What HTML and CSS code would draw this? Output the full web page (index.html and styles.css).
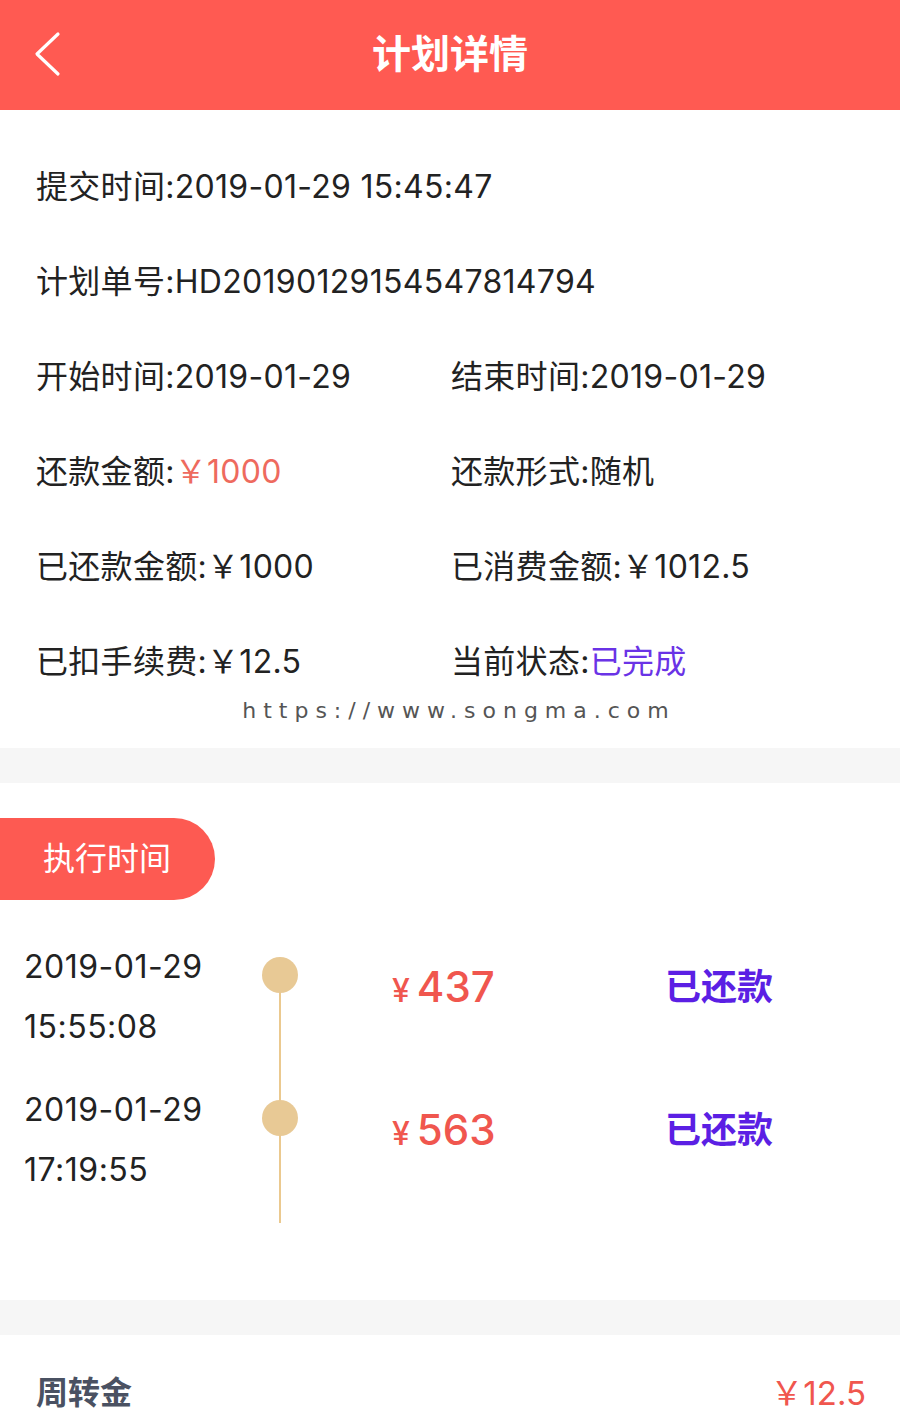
FILE: index.html
```html
<!DOCTYPE html>
<html lang="zh-CN">
<head>
  <meta charset="UTF-8">
  <meta name="viewport" content="width=device-width, initial-scale=1.0">
  <title>计划详情</title>
  <link rel="stylesheet" href="styles.css">
</head>
<body>
  <!-- Header -->
  <div class="header">
    <a class="back" href="#">
      <svg width="30" height="46" viewBox="0 0 30 46"><polyline points="25,3 4,23 25,43" fill="none" stroke="#fff" stroke-width="3.2" stroke-linecap="round" stroke-linejoin="round"/></svg>
    </a>
    <h1>计划详情</h1>
  </div>

  <!-- Plan info -->
  <div class="section info">
    <div class="info-row full">提交时间:2019-01-29 15:45:47</div>
    <div class="info-row full">计划单号:HD20190129154547814794</div>
    <div class="info-grid">
      <div class="info-row">开始时间:2019-01-29</div>
      <div class="info-row">结束时间:2019-01-29</div>
      <div class="info-row">还款金额:<span class="money">￥1000</span></div>
      <div class="info-row">还款形式:随机</div>
      <div class="info-row">已还款金额:￥1000</div>
      <div class="info-row">已消费金额:￥1012.5</div>
      <div class="info-row">已扣手续费:￥12.5</div>
      <div class="info-row">当前状态:<span class="status-text">已完成</span></div>
    </div>
    <div class="watermark">https://www.songma.com</div>
  </div>

  <div class="divider"></div>

  <!-- Execution timeline -->
  <div class="section timeline">
    <div class="pill">执行时间</div>
    <div class="tl-list">
      <div class="tl-row">
        <div class="tl-time">
          <div>2019-01-29</div>
          <div>15:55:08</div>
        </div>
        <div class="tl-axis"><span class="dot"></span></div>
        <div class="tl-amount"><small>¥</small>437</div>
        <div class="tl-status">已还款</div>
      </div>
      <div class="tl-row">
        <div class="tl-time">
          <div>2019-01-29</div>
          <div>17:19:55</div>
        </div>
        <div class="tl-axis"><span class="dot"></span></div>
        <div class="tl-amount"><small>¥</small>563</div>
        <div class="tl-status">已还款</div>
      </div>
    </div>
  </div>

  <div class="divider"></div>

  <!-- Footer summary -->
  <div class="section summary">
    <span class="summary-label">周转金</span>
    <span class="summary-value">￥12.5</span>
  </div>
</body>
</html>
```

FILE: styles.css
```css
/* Reset */
* {
  margin: 0;
  padding: 0;
  box-sizing: border-box;
}

body {
  font-family: "Inter", "Noto Sans CJK SC", sans-serif;
  background: #fff;
  color: #222;
}

/* Header */
.header {
  height: 110px;
  background: #ff5a52;
  display: flex;
  align-items: center;
  justify-content: center;
  position: relative;
}

.header h1 {
  color: #fff;
  font-size: 39px;
  font-weight: 700;
  line-height: 1;
  margin-top: -4px;
}

.back {
  position: absolute;
  left: 33px;
  top: 31px;
  display: block;
  width: 30px;
  height: 46px;
}

.section {
  background: #fff;
}

.divider {
  height: 35px;
  background: #f6f6f6;
}

/* Info */
.info {
  padding: 47px 0 23px 36px;
  display: flex;
  flex-direction: column;
  gap: 35px;
}

.info-grid {
  display: grid;
  grid-template-columns: 415px 1fr;
  row-gap: 35px;
}

.info-row {
  font-size: 32px;
  letter-spacing: 0.3px;
  line-height: 60px;
  height: 60px;
  white-space: nowrap;
}

.money {
  color: #ee6a5e;
}

.status-text {
  color: #6a33e6;
}

.watermark {
  margin-top: -30px;
  margin-left: -18px;
  text-align: center;
  font-size: 22px;
  line-height: 28px;
  letter-spacing: 7px;
  color: #555;
  font-family: "DejaVu Sans", sans-serif;
}

/* Timeline */
.timeline {
  padding: 35px 0 77px;
}

.pill {
  width: 215px;
  height: 82px;
  background: #fd5a52;
  border-radius: 0 41px 41px 0;
  color: #fff;
  font-size: 32px;
  line-height: 82px;
  padding-left: 43px;
}

.tl-list {
  padding: 37px 0 0 24px;
}

.tl-row {
  display: flex;
  align-items: flex-start;
  padding-bottom: 23px;
}

.tl-time {
  width: 220px;
  font-size: 32px;
  letter-spacing: 0.5px;
  line-height: 60px;
  color: #222;
}

.tl-axis {
  width: 72px;
  align-self: stretch;
  position: relative;
  margin-bottom: -23px;
  display: flex;
  justify-content: center;
}

.tl-axis::before {
  content: '';
  position: absolute;
  top: 0;
  bottom: 0;
  left: 35px;
  width: 2px;
  background: #ebc98f;
}

.tl-row:first-child .tl-axis::before {
  top: 38px;
}

.dot {
  width: 36px;
  height: 36px;
  border-radius: 50%;
  background: #e8c995;
  margin-top: 20px;
  position: relative;
}

.tl-amount {
  width: 273px;
  margin-left: 76px;
  margin-top: 20px;
  font-size: 42px;
  font-weight: 500;
  line-height: 60px;
  color: #f0564e;
}

.tl-amount small {
  font-size: 32px;
  margin-right: 7px;
}

.tl-status {
  margin-top: 20px;
  font-size: 36px;
  font-weight: 700;
  line-height: 60px;
  color: #5b1fe4;
}

/* Summary */
.summary {
  display: flex;
  justify-content: space-between;
  align-items: center;
  padding: 30px 34px 0 36px;
  height: 86px;
}

.summary-label {
  font-size: 32px;
  font-weight: 700;
  color: #4a5162;
  line-height: 54px;
}

.summary-value {
  font-size: 33px;
  color: #f0564e;
  line-height: 54px;
}
```
